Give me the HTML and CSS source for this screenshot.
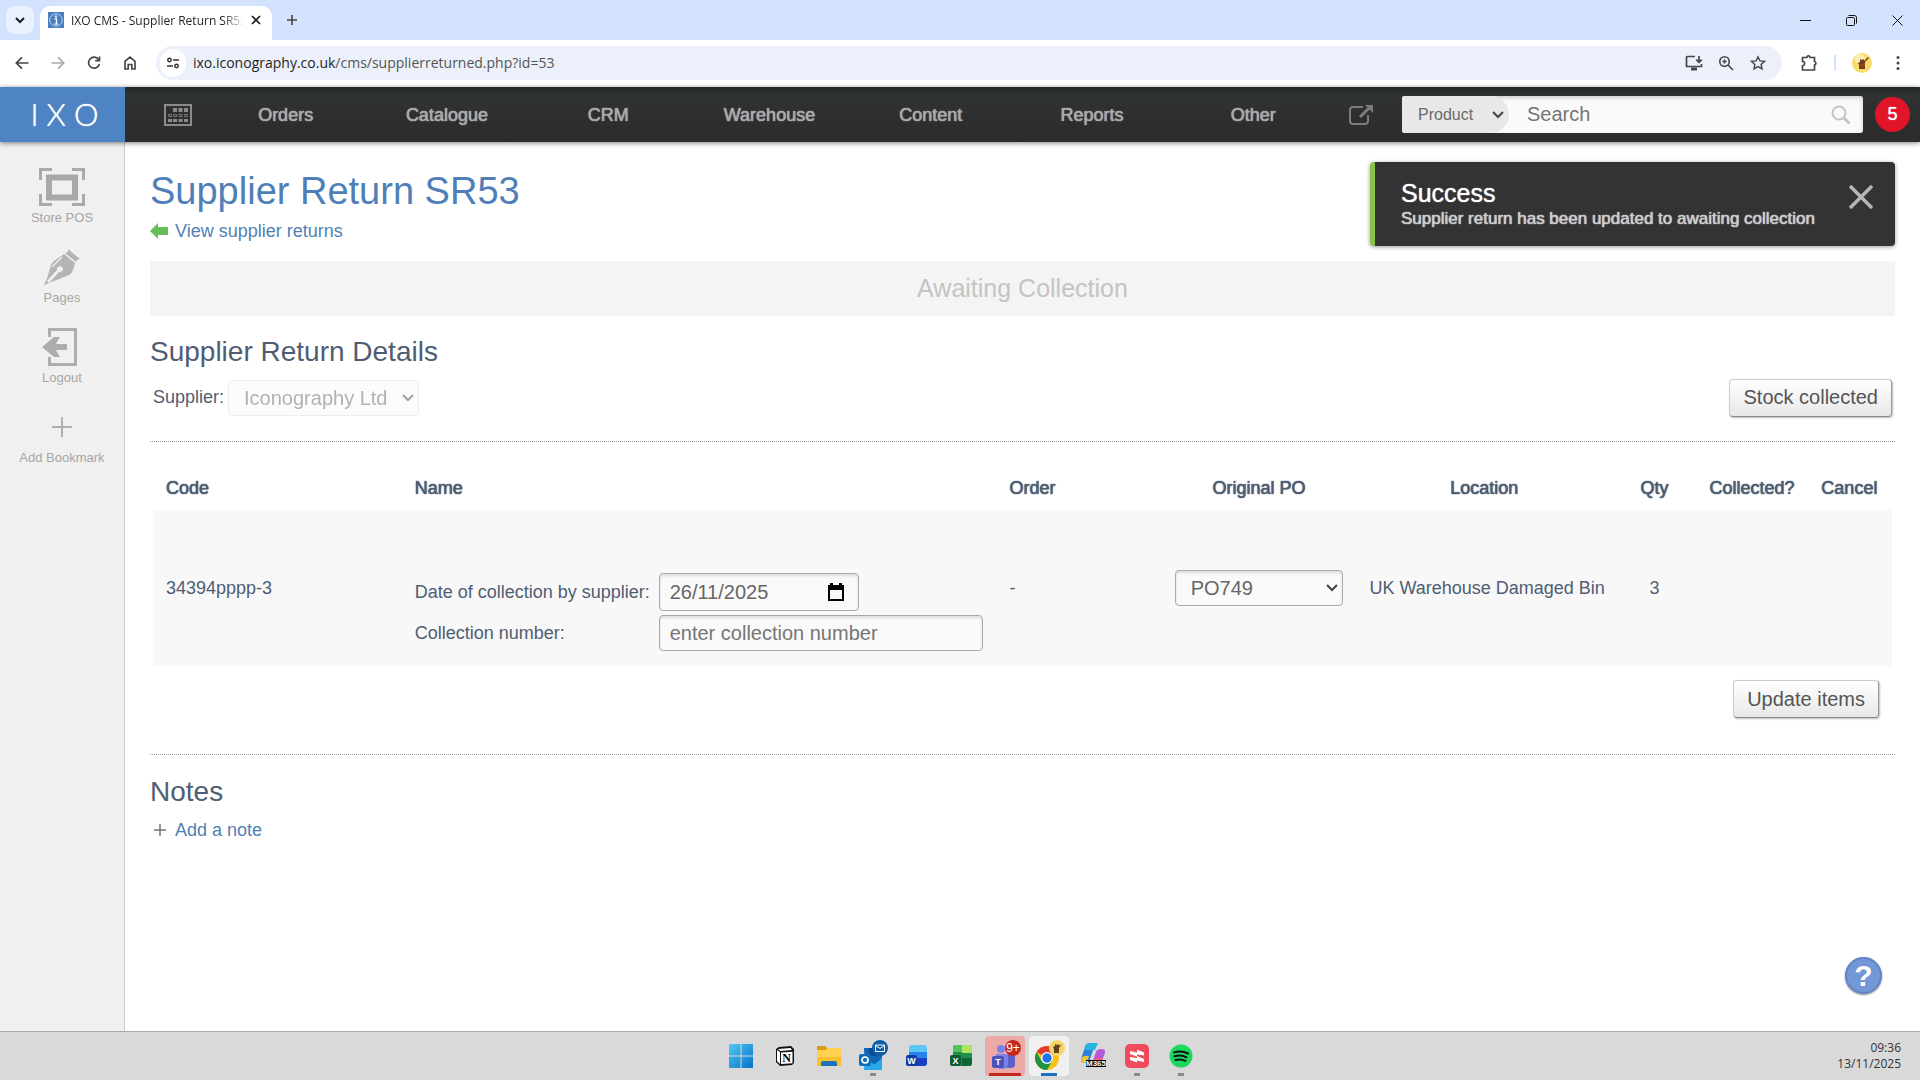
FILE: index.html
```html
<!DOCTYPE html>
<html lang="en-GB">

<head>
    <meta charset="UTF-8"/>
    <meta name="viewport" content="width=device-width, initial-scale=1.0"/>
    <title>IXO CMS - Supplier Return SR53</title>
    <link rel="stylesheet" href="styles.css">
</head>

<body>
<!-- browser tabs -->
<div class="tab-strip">
    <button class="tab-search" aria-label="Search tabs">
        <svg width="12" height="12" viewBox="0 0 12 12" fill="none" stroke="#1f1f1f" stroke-width="2"><path d="M2 4l4 4 4-4"/></svg>
    </button>
    <div class="tab">
        <svg width="16" height="16" viewBox="0 0 16 16"><rect width="16" height="16" fill="#4b7fc0"/><circle cx="8" cy="8" r="6.3" fill="none" stroke="#b9d0ee"/><circle cx="8" cy="4.4" r="1.1" fill="#fff"/><path d="M6.5 6.8h2v5M6.3 12.2h3.6" fill="none" stroke="#fff" stroke-width="1.3"/></svg>
        <span class="tab-title">IXO CMS - Supplier Return SR53</span>
        <button class="plain" aria-label="Close tab">
            <svg width="10" height="10" viewBox="0 0 10 10" stroke="#1f1f1f" stroke-width="1.7"><path d="M1 1l8 8M9 1l-8 8"/></svg>
        </button>
    </div>
    <button class="plain new-tab" aria-label="New tab">
        <svg width="12" height="12" viewBox="0 0 12 12" stroke="#444" stroke-width="1.6"><path d="M6 1v10M1 6h10"/></svg>
    </button>
    <div class="window-buttons">
        <button class="plain" aria-label="Minimise"><svg width="11" height="11" viewBox="0 0 11 11" stroke="#111"><path d="M0 5.5h11"/></svg></button>
        <button class="plain" aria-label="Restore"><svg width="11" height="11" viewBox="0 0 11 11" fill="none" stroke="#111"><rect x="0.5" y="2.5" width="8" height="8" rx="1"/><path d="M2.5 .5h6q2 0 2 2v6"/></svg></button>
        <button class="plain" aria-label="Close"><svg width="11" height="11" viewBox="0 0 11 11" stroke="#111"><path d="M.5 .5l10 10M10.500 .5l-10 10"/></svg></button>
    </div>
</div>

<!-- browser address bar -->
<div class="toolbar">
    <button class="plain tool" aria-label="Back"><svg width="16" height="16" viewBox="0 0 16 16" fill="none" stroke="#444746" stroke-width="1.7"><path d="M14.500 8H2.500M8 2.300L2.300 8 8 13.700"/></svg></button>
    <button class="plain tool" aria-label="Forward"><svg width="16" height="16" viewBox="0 0 16 16" fill="none" stroke="#a9abad" stroke-width="1.7"><path d="M1.500 8h12M8 2.300L13.700 8 8 13.700"/></svg></button>
    <button class="plain tool" aria-label="Reload"><svg width="16" height="16" viewBox="0 0 16 16" fill="none" stroke="#444746" stroke-width="1.7"><path d="M12.600 4.500A5.500 5.500 0 1 0 13.400 9M13.500 1.500v4.200H9.200"/></svg></button>
    <button class="plain tool" aria-label="Home"><svg width="16" height="16" viewBox="0 0 16 16" fill="none" stroke="#444746" stroke-width="1.7"><path d="M3 6.300L8 2.200l5 4.100V14H9.800V9.500H6.200V14H3z"/></svg></button>
    <div class="address-bar">
        <span class="site-info"><svg width="14" height="14" viewBox="0 0 14 14" fill="none" stroke="#333" stroke-width="1.500"><circle cx="3.500" cy="4" r="1.700"/><path d="M7 4h6M1 10h6"/><circle cx="10.500" cy="10" r="1.700"/></svg></span>
        <span class="url">ixo.iconography.co.uk<span class="url-path">/cms/supplierreturned.php?id=53</span></span>
        <button class="plain tool-small" aria-label="Install"><svg width="18" height="18" viewBox="0 0 18 18" fill="none" stroke="#444746" stroke-width="1.700"><path d="M10 2.500H2.500q-1 0-1 1v9h15V10M14 2v6M11.200 5.600L14 8.400l2.800-2.800"/><path d="M6 15h6" stroke-width="3"/></svg></button>
        <button class="plain tool-small" aria-label="Zoom"><svg width="16" height="16" viewBox="0 0 16 16" fill="none" stroke="#444746" stroke-width="1.600"><circle cx="6.500" cy="6.500" r="4.700"/><path d="M10 10l5 5M4.500 6.500h4M6.500 4.500v4"/></svg></button>
        <button class="plain tool-small" aria-label="Bookmark"><svg width="16" height="16" viewBox="0 0 16 16" fill="none" stroke="#444746" stroke-width="1.400"><path d="M8 1.800l1.900 4.100 4.500.5-3.300 3 .9 4.400L8 11.600l-4 2.200.9-4.400-3.300-3 4.500-.5z"/></svg></button>
    </div>
    <button class="plain extensions" aria-label="Extensions"><svg width="18" height="18" viewBox="0 0 18 18" fill="none" stroke="#444746" stroke-width="1.700"><path d="M2.500 3.500h4.300a1.600 1.600 0 0 1 3.200 0h4.500v4a1.800 1.800 0 0 1 0 3.500v5h-12v-4.200q2.200-.6 2.200-2.300T2.500 7.300z"/></svg></button>
    <span class="separator"></span>
    <button class="plain avatar" aria-label="Profile"><svg width="20" height="20" viewBox="0 0 20 20"><circle cx="10" cy="10" r="10" fill="#f8dc6a"/><circle cx="8" cy="6" r="5" fill="#fbeeb0"/><path d="M8 6l2 1 2-1v2l4-4 1 1-4 4v7H7v-4l-1-2 2-1z" fill="#7a3c1d"/><path d="M7 12h6" stroke="#c54a24"/></svg></button>
    <button class="plain browser-menu" aria-label="Menu"><svg width="4" height="16" viewBox="0 0 4 16" fill="#444746"><circle cx="2" cy="2.500" r="1.500"/><circle cx="2" cy="8" r="1.500"/><circle cx="2" cy="13.500" r="1.500"/></svg></button>
</div>

<header class="header">
    <a href="#" class="logo" aria-label="IXO"><span>I</span><span>X</span><span>O</span></a>
    <nav class="nav">
        <a href="#" class="nav-icon" aria-label="Calendar">
            <svg width="28" height="22" viewBox="0 0 28 22"><rect x="1" y="1" width="26" height="20" fill="none" stroke="#8b8b8b" stroke-width="2"/><g fill="#8b8b8b"><path d="M9 4h4v4H9zM14.500 4h4v4h-4zM20 4h4v4h-4zM4 15h4v3H4zM9 15h4v3H9zM14.500 15h4v3h-4zM20 15h4v3h-4z"/></g><path d="M4.500 10.500h3v2h-3zM9.500 10.500h3v2h-3zM15 10.500h3v2h-3zM20.500 10.500h3v2h-3z" fill="none" stroke="#777"/></svg>
        </a>
        <a href="#" class="nav-link">Orders</a>
        <a href="#" class="nav-link">Catalogue</a>
        <a href="#" class="nav-link">CRM</a>
        <a href="#" class="nav-link">Warehouse</a>
        <a href="#" class="nav-link">Content</a>
        <a href="#" class="nav-link">Reports</a>
        <a href="#" class="nav-link">Other</a>
        <a href="#" class="nav-icon external" aria-label="View site">
            <svg width="25" height="22" viewBox="0 0 25 22" fill="none" stroke="#7c7c7c" stroke-width="2"><path d="M14 3H4Q1 3 1 6v11q0 3 3 3h12q3 0 3-3v-6"/><path d="M11 13l9-9" stroke-width="3"/><path d="M16 1h8v8z" fill="#7c7c7c" stroke="none"/></svg>
        </a>
    </nav>
    <form class="search">
        <select class="search-type" aria-label="Search type">
            <option>Product</option>
        </select>
        <input type="text" class="search-input" placeholder="Search" aria-label="Search"/>
        <button type="button" class="plain" aria-label="Go"><svg width="20" height="20" viewBox="0 0 20 20" fill="none" stroke="#c4c4c4" stroke-width="2"><circle cx="8" cy="8" r="6.500"/><path d="M12.500 12.500l6 6" stroke-width="3"/></svg></button>
    </form>
    <a href="#" class="alerts">5</a>
</header>

<div class="page">
    <aside class="sidebar">
        <a href="#" class="bookmark">
            <svg width="46" height="38" viewBox="0 0 46 38" fill="none" stroke="#a9a9a9"><path d="M1.500 12V1.500H13M33 1.500h11.500V12M44.500 26v10.500H33M13 36.500H1.500V26" stroke-width="3"/><rect x="10" y="9.500" width="26" height="20" stroke-width="6"/></svg>
            <span>Store POS</span>
        </a>
        <a href="#" class="bookmark">
            <svg width="36" height="36" viewBox="0 0 36 36" fill="#b4b4b4"><path d="M24 0l12 10-3 1-1 2L21 4l3-1z"/><path d="M20 5l11 9-2 7q-1 3-4 5L5 34l10-11a3 3 0 1 0-2-2L2 33 7 16q1-2 3-4z"/><path d="M18 8L8 18" stroke="#f0f0f0" stroke-width="1.500"/><path d="M0 36l2-5 3 3z"/></svg>
            <span>Pages</span>
        </a>
        <a href="#" class="bookmark">
            <svg width="40" height="38" viewBox="0 0 40 38" fill="none" stroke="#adadad" stroke-width="3"><path d="M7.500 9V1.500h26v35h-26V29"/><path d="M25 19H8" stroke-width="6"/><path d="M0 19L12 9h6l-6 10 6 10h-6z" fill="#adadad" stroke="none"/></svg>
            <span>Logout</span>
        </a>
        <a href="#" class="bookmark">
            <svg width="20" height="20" viewBox="0 0 20 20" stroke="#b0b0b0" stroke-width="2"><path d="M10 0v20M0 10h20"/></svg>
            <span>Add Bookmark</span>
        </a>
    </aside>

    <main class="content">
        <h1>Supplier Return SR53</h1>
        <a href="#" class="icon-link">
            <svg width="18" height="16" viewBox="0 0 18 16" fill="#68bd5b"><path d="M0 8l8-8v4h10v8H8v4z"/></svg>
            View supplier returns
        </a>
        <div class="status">Awaiting Collection</div>

        <h2>Supplier Return Details</h2>
        <div class="details">
            <label for="supplier">Supplier:</label>
            <select id="supplier" class="field select" disabled>
                <option>Iconography Ltd</option>
            </select>
            <button class="btn details-btn">Stock collected</button>
        </div>

        <div class="items">
            <table>
                <thead>
                <tr>
                    <th class="col-code">Code</th>
                    <th class="col-name">Name</th>
                    <th class="col-order">Order</th>
                    <th class="col-po center">Original PO</th>
                    <th class="col-location center">Location</th>
                    <th class="col-qty center">Qty</th>
                    <th class="col-collected center">Collected?</th>
                    <th class="col-cancel center">Cancel</th>
                </tr>
                </thead>
                <tbody>
                <tr>
                    <td>34394pppp-3</td>
                    <td>
                        <div class="collection">
                            <label for="collection-date">Date of collection by supplier:</label>
                            <div class="field date-field">
                                <input type="text" id="collection-date" value="26/11/2025"/>
                                <button class="plain" aria-label="Show date picker"><svg width="16" height="18" viewBox="0 0 16 18"><path d="M1 4h14v13H1z" fill="none" stroke="#000" stroke-width="2"/><path d="M0 2h16v5H0zM2 0h3v3H2zM11 0h3v3h-3z"/></svg></button>
                            </div>
                            <label for="collection-number">Collection number:</label>
                            <input type="text" id="collection-number" class="field" placeholder="enter collection number"/>
                        </div>
                    </td>
                    <td>-</td>
                    <td class="center">
                        <select class="field select po-select" aria-label="Original PO">
                            <option>PO749</option>
                        </select>
                    </td>
                    <td class="center">UK Warehouse Damaged Bin</td>
                    <td class="center">3</td>
                    <td></td>
                    <td></td>
                </tr>
                </tbody>
            </table>
            <div class="items-footer">
                <button class="btn">Update items</button>
            </div>
        </div>

        <h2>Notes</h2>
        <a href="#" class="icon-link add-note">
            <svg width="18" height="12" viewBox="0 0 18 12" stroke="#777" stroke-width="1.500"><path d="M10 0v12M4 6h12"/></svg>
            Add a note
        </a>

        <div class="toast">
            <div>
                <div class="toast-title">Success</div>
                <div class="toast-text">Supplier return has been updated to awaiting collection</div>
            </div>
            <button class="plain toast-close" aria-label="Dismiss"><svg width="24" height="24" viewBox="0 0 24 24" stroke="#b5b5b5" stroke-width="3.500"><path d="M1 1l22 22M23 1L1 23"/></svg></button>
        </div>
        <button class="help" aria-label="Help">?</button>
    </main>
</div>

<footer class="taskbar">
    <div class="apps">
        <a href="#" class="app" aria-label="Start"><svg width="24" height="24" viewBox="0 0 24 24"><defs><linearGradient id="win" x2="1" y2="1"><stop stop-color="#4fc9f5"/><stop offset="1" stop-color="#0571c9"/></linearGradient></defs><path d="M0 1q0-1 1-1h10.500v11.500H0zM12.500 0H23q1 0 1 1v10.500H12.500zM0 12.500h11.500V24H1q-1 0-1-1zM12.500 12.500H24V23q0 1-1 1H12.500z" fill="url(#win)"/></svg></a>
        <a href="#" class="app" aria-label="Notion"><svg width="20" height="20" viewBox="0 0 20 20"><path d="M1 3l3-2 12-1 3 3v14l-2 2-12 1-4-4z" fill="#111"/><path d="M2 4l3 2v12l-3-3zM6 6.500l11.500-.7v11.400L6 18zM3 3l12.500-1L17 4 5.500 5z" fill="#fff"/><text x="11.500" y="16" text-anchor="middle" class="notion-n">N</text></svg></a>
        <a href="#" class="app" aria-label="Explorer"><svg width="26" height="22" viewBox="0 0 26 22"><path d="M1 1h8l2 2v5H1z" fill="#dc9a15"/><path d="M1 5h9l2-2h13v17q0 1-1 1H2q-1 0-1-1z" fill="#ffd052"/><path d="M1 12h24v8q0 1-1 1H2q-1 0-1-1z" fill="#fbc12c"/><path d="M5 21v-3q0-2 2-2h12q2 0 2 2v3z" fill="#1c73bd"/></svg></a>
        <a href="#" class="app running" aria-label="Outlook"><svg width="32" height="32" viewBox="0 0 32 32"><path d="M7 8h18v22H8z" fill="#1066b5"/><path d="M8 18l17 12H7zM25 18v12H11z" fill="#28a8ea"/><path d="M12 8h8v8h-8z" fill="#0b4a92"/><rect x="2" y="14" width="12" height="12" rx="2" fill="#0f6cbd"/><circle cx="8" cy="20" r="3" fill="none" stroke="#fff" stroke-width="1.700"/><circle cx="23" cy="8" r="8" fill="#0f5ea8"/><path d="M18.500 5h9v6.500h-9zM18.500 5.500l4.500 3 4.500-3" fill="none" stroke="#fff"/></svg></a>
        <a href="#" class="app" aria-label="Word"><svg width="24" height="24" viewBox="0 0 24 24"><rect x="4" y="1" width="18" height="9" rx="3" fill="#5cc6f5"/><path d="M4 8h18v7H4z" fill="#2a83ea"/><path d="M4 14h18v5q0 3-3 3H4z" fill="#173fc0"/><rect x="1" y="11" width="11" height="11" rx="2" fill="#123ba8"/><text x="6.500" y="20" text-anchor="middle" class="app-letter">W</text></svg></a>
        <a href="#" class="app" aria-label="Excel"><svg width="24" height="24" viewBox="0 0 24 24"><rect x="4" y="1" width="19" height="21" rx="3" fill="#1d8f4c"/><path d="M13 1h7q3 0 3 3v5H13z" fill="#b0e465"/><path d="M4 8V4q0-3 3-3h6v7z" fill="#52c45f"/><path d="M13 14h10v5q0 3-3 3h-7z" fill="#0d6636"/><rect x="1" y="11" width="11" height="11" rx="2" fill="#0d5c32"/><text x="6.500" y="20" text-anchor="middle" class="app-letter">X</text></svg></a>
        <a href="#" class="app teams" aria-label="Teams"><svg width="32" height="34" viewBox="0 0 32 34"><circle cx="12" cy="10" r="4" fill="#7b83eb"/><rect x="13" y="15" width="13" height="14" rx="4" fill="#5b5fc7"/><path d="M7 15h12v10q0 5-6 5t-6-5z" fill="#7b83eb"/><rect x="3" y="17" width="12" height="12" rx="2" fill="#4b53bc"/><text x="9" y="26" text-anchor="middle" class="app-letter">T</text><circle cx="24" cy="9" r="8" fill="#c6281c"/><text x="24" y="13" text-anchor="middle" class="badge-text">9+</text></svg></a>
        <a href="#" class="app chrome" aria-label="Chrome"><svg width="32" height="34" viewBox="0 0 32 34"><g transform="translate(14 19)"><circle r="12" fill="#fbc116"/><path d="M0 0L-10.400-6A12 12 0 0 1 10.400-6z" fill="#e33b2e"/><path d="M-10.400-6A12 12 0 0 0 0 12L5.200 3-5.200 3z" fill="#229342"/><circle r="6" fill="#fff"/><circle r="4.700" fill="#1a73e8"/></g><circle cx="24" cy="9" r="8" fill="#f3d768"/><path d="M22 5l2 1 2-1v2l3-2-3 4v5h-5v-4l-1-2 2-1z" fill="#61401c"/></svg></a>
        <a href="#" class="app" aria-label="M365"><svg width="28" height="28" viewBox="0 0 28 28"><path d="M2 17L6 5q1-4 5-4h8q-3 0-4 4l-4 12q-1 4-5 4-5 0-4-4z" fill="#2a7fe0"/><path d="M6 5q1-4 5-4h8l-3 7H5z" fill="#28b4d8"/><path d="M2 17q2-4 8-3l-1 3q-1 4-4 4t-3-4z" fill="#f2c230"/><path d="M26 11l-4 10q-1 4-5 4H9q3 0 4-4l4-11q1-3 5-3 5 0 4 4z" fill="#b45bd6"/><path d="M24 16l-2 5q-1 4-5 4H9q3 0 4-4l2-5z" fill="#ee5a8c"/><rect x="7" y="18" width="20" height="7" fill="#000"/><text x="17" y="24" text-anchor="middle" class="m365">M365</text></svg></a>
        <a href="#" class="app running" aria-label="Screen recorder"><svg width="24" height="24" viewBox="0 0 24 24"><rect width="24" height="24" rx="5" fill="#f04a5e"/><path d="M5 7l7 1.500V5.500l7 3v3l-7-1v2L5 10zM5 13l7 1v-2l7 3v3l-7-1.500v2L5 16z" fill="#fff"/></svg></a>
        <a href="#" class="app running" aria-label="Spotify"><svg width="24" height="24" viewBox="0 0 24 24"><circle cx="12" cy="12" r="11.500" fill="#1ed760"/><path d="M5 8.500q7.500-2.200 14 1M5.500 12.300q7-1.800 12 1M6.500 16q5.500-1.500 10 .8" fill="none" stroke="#111" stroke-width="2" stroke-linecap="round"/></svg></a>
    </div>
    <div class="clock">09:36<br/>13/11/2025</div>
</footer>
</body>

</html>
```
FILE: styles.css
```css
* {
    box-sizing: border-box;
}

body {
    margin: 0;
    min-height: 100vh;
    display: flex;
    flex-direction: column;
    font-family: "Liberation Sans", Arial, sans-serif;
    font-size: 18px;
    color: #4f5d73;
    background-color: #fff;
}

svg {
    display: block;
    flex: none;
}

a {
    color: #4f7fb5;
    text-decoration: none;
}

input,
select,
button {
    font-family: inherit;
}

.plain {
    display: flex;
    align-items: center;
    justify-content: center;
    padding: 0;
    border: none;
    background: none;
}

.center {
    text-align: center;
}

/* browser */
.tab-strip {
    display: flex;
    height: 40px;
    padding-left: 6px;
    background-color: #d3e2fd;
    font-family: "Open Sans", sans-serif;
}

.tab-search {
    display: flex;
    align-items: center;
    justify-content: center;
    width: 28px;
    height: 28px;
    margin: 6px 6px 0 0;
    padding: 0;
    border: none;
    border-radius: 9px;
    background-color: #e9f0fe;
}

.tab {
    display: flex;
    align-items: center;
    gap: 7px;
    width: 232px;
    margin-top: 6px;
    padding: 0 11px 6px 8px;
    border-radius: 10px 10px 0 0;
    background-color: #fff;
}

.tab-title {
    flex: 1;
    overflow: hidden;
    white-space: nowrap;
    font-size: 12px;
    color: #1f1f1f;
    -webkit-mask-image: linear-gradient(to right, #000 88%, transparent);
}

.new-tab {
    margin-left: 14px;
}

.window-buttons {
    display: flex;
    margin-left: auto;
}

.window-buttons .plain {
    width: 46px;
}

.toolbar {
    display: flex;
    align-items: center;
    height: 47px;
    padding: 0 12px 1px 4px;
    background-color: #fff;
    font-family: "Open Sans", sans-serif;
}

.tool {
    width: 36px;
}

.address-bar {
    display: flex;
    align-items: center;
    flex: 1;
    height: 34px;
    margin-left: 8px;
    padding: 0 8px 0 4px;
    border-radius: 17px;
    background-color: #ebf0fa;
}

.site-info {
    display: flex;
    align-items: center;
    justify-content: center;
    width: 26px;
    height: 28px;
    border-radius: 14px;
    background-color: #fff;
}

.url {
    flex: 1;
    margin-left: 7px;
    font-size: 14px;
    line-height: 18px;
    padding-bottom: 1px;
    color: #1f1f1f;
}

.url-path {
    color: #555;
}

.tool-small {
    width: 32px;
}

.extensions {
    margin-left: 18px;
}

.separator {
    width: 2px;
    height: 16px;
    margin: 0 16px;
    background-color: #d3e2fd;
}

.browser-menu {
    width: 20px;
    margin-left: 16px;
}

/* cms header */
.header {
    position: relative;
    z-index: 1;
    display: flex;
    align-items: center;
    height: 55px;
    padding-right: 10px;
    background: linear-gradient(#262827, #2f3331 15%, #2b2b2b);
    box-shadow: 0 1px 5px rgba(0, 0, 0, 0.5);
}

.logo {
    display: flex;
    align-items: center;
    justify-content: center;
    gap: 8px;
    width: 125px;
    height: 100%;
    padding: 0 0 2px 4px;
    background-color: #4e84c4;
    color: #fff;
    font-family: Lato, sans-serif;
    font-size: 31px;
    font-weight: 300;
    text-shadow: 0 0 1px #fff;
}

.nav {
    display: flex;
    align-items: center;
    flex: 1;
}

.nav-icon {
    display: flex;
    justify-content: center;
    width: 80px;
    padding-left: 25px;
}

.nav-icon.external {
    width: 68px;
    padding: 0 12px 0 0;
}

.nav-link {
    flex: 1;
    padding-top: 1px;
    text-align: center;
    color: #aaa;
    text-shadow: 0 0 1px #aaa, 0 0 1px #aaa;
}

.search {
    display: flex;
    align-items: center;
    width: 461px;
    height: 37px;
    padding-right: 12px;
    border-radius: 3px;
    background-color: #fafafa;
    box-shadow: inset 0 2px 4px #ccc;
}

.search-type {
    appearance: none;
    width: 107px;
    height: 37px;
    padding: 0 0 0 16px;
    border: none;
    border-radius: 3px 20px 20px 3px;
    background: #e8e8e8 url("data:image/svg+xml,%3Csvg xmlns='http://www.w3.org/2000/svg' width='12' height='8'%3E%3Cpath d='M1 1l5 5 5-5' fill='none' stroke='%23444' stroke-width='2'/%3E%3C/svg%3E") no-repeat right 5px center;
    color: #6a6a6a;
    font-size: 16px;
}

.search-input {
    flex: 1;
    min-width: 0;
    padding: 0 0 0 18px;
    border: none;
    background: none;
    font-size: 20px;
}

input::placeholder {
    color: #757575;
}

.alerts {
    width: 35px;
    margin-left: 12px;
    border-radius: 50%;
    background-color: #e1142a;
    color: #fff;
    line-height: 35px;
    text-align: center;
    text-shadow: 0 0 1px #fff;
}

/* page */
.page {
    display: flex;
    flex: 1;
}

.sidebar {
    width: 125px;
    padding-top: 25px;
    border-right: 1px solid #ccc;
    background-color: #f0f0f0;
}

.bookmark {
    display: grid;
    grid-template-rows: 40px 20px;
    place-items: center;
    height: 80px;
    align-content: start;
    color: #a6a6a6;
    font-size: 13px;
}

.content {
    position: relative;
    flex: 1;
    padding: 25px 25px 24px;
}

h1,
h2 {
    margin: 0;
    font-weight: normal;
}

h1 {
    font-size: 38px;
    line-height: 48px;
    color: #4f7fb8;
}

h2 {
    font-size: 28px;
    line-height: 36px;
}

.icon-link {
    display: flex;
    align-items: center;
    gap: 7px;
    line-height: 32px;
}

.add-note {
    margin-top: 4px;
}

.status {
    margin: 14px 0 18px;
    background-color: #f4f4f4;
    color: #c4c4c4;
    font-size: 25px;
    line-height: 55px;
    text-align: center;
}

.details {
    display: flex;
    align-items: center;
    gap: 4px;
    height: 72px;
    padding: 0 3px 16px;
    border-bottom: 1px dotted #999;
}

.details-btn {
    margin-left: auto;
}

.field {
    height: 36px;
    padding: 0 10px;
    border: 1px solid #aaa;
    border-radius: 4px;
    background-color: #fafafa;
    box-shadow: inset 0 2px 3px #ddd;
    color: #666;
    font-size: 20px;
}

.select {
    appearance: none;
    padding: 0 30px 0 15px;
    background-image: url("data:image/svg+xml,%3Csvg xmlns='http://www.w3.org/2000/svg' width='12' height='8'%3E%3Cpath d='M1 1l5 5 5-5' fill='none' stroke='%23444' stroke-width='2'/%3E%3C/svg%3E");
    background-repeat: no-repeat;
    background-position: right 4px center;
}

.select:disabled {
    opacity: 0.5;
    border-color: #ddd;
    box-shadow: none;
}

.btn {
    height: 38px;
    padding: 0 13px;
    border: 1px solid #ccc;
    border-right-color: #999;
    border-bottom-color: #888;
    border-radius: 4px;
    background: linear-gradient(#fff, #e8e8e8);
    box-shadow: 1px 1px 2px #bbb;
    color: #555;
    font-size: 20px;
}

.items {
    margin-bottom: 19px;
    padding: 24px 3px 36px;
    border-bottom: 1px dotted #999;
}

table {
    width: 100%;
    border-collapse: collapse;
    table-layout: fixed;
}

th,
td {
    height: 44px;
    padding: 0 13px;
    text-align: left;
    white-space: nowrap;
}

th {
    font-weight: normal;
    text-shadow: 0 0 1px #4f5d73, 0 0 1px #4f5d73;
}

td {
    height: 156px;
    background-color: #f8f8f8;
}

th.center,
td.center {
    text-align: center;
}

.col-code {
    width: 14.3%;
}

.col-name {
    width: 34.2%;
}

.col-order {
    width: 9.5%;
}

.col-po {
    width: 11.2%;
}

.col-location {
    width: 14.7%;
}

.col-qty {
    width: 4.9%;
}

.col-collected {
    width: 6.3%;
    padding: 0;
}

.col-cancel {
    width: 4.9%;
    padding: 0;
}

.collection {
    display: grid;
    grid-template-columns: 244px 1fr;
    align-items: center;
    row-gap: 4px;
    padding-top: 48px;
}

.date-field {
    display: flex;
    align-items: center;
    width: 200px;
    height: 38px;
    padding-right: 14px;
}

.date-field input {
    flex: 1;
    min-width: 0;
    padding: 0;
    border: none;
    background: none;
    color: #666;
    font-size: 20px;
}

.po-select {
    width: 100%;
}

.items-footer {
    padding: 14px 13px 0 0;
    text-align: right;
}

/* floating over the page */
.toast {
    position: absolute;
    top: 20px;
    right: 25px;
    display: flex;
    align-items: flex-start;
    justify-content: space-between;
    width: 525px;
    height: 84px;
    padding: 17px 22px 0 26px;
    border-left: 5px solid #8bc34a;
    border-radius: 4px;
    background-color: #333;
    box-shadow: 0 1px 4px #999;
}

.toast-title {
    color: #fff;
    font-size: 25px;
    line-height: 28px;
    text-shadow: 0 0 1px #fff;
}

.toast-text {
    color: #ccc;
    font-size: 17px;
    line-height: 24px;
    white-space: nowrap;
    text-shadow: 0 0 1px #ccc, 0 0 1px #ccc;
}

.toast-close {
    margin-top: 6px;
}

.help {
    position: absolute;
    right: 38px;
    bottom: 37px;
    width: 37px;
    height: 37px;
    padding: 0;
    border: 2px solid #6285c6;
    border-radius: 50%;
    background-color: #7497d8;
    box-shadow: 0 1px 2px #888;
    color: #fff;
    font-size: 30px;
    font-weight: bold;
    line-height: 30px;
}

/* taskbar */
.taskbar {
    display: grid;
    grid-template-columns: 1fr auto 1fr;
    height: 49px;
    border-top: 1px solid #aaa;
    background-color: #d9d9d9;
}

.apps {
    grid-column: 2;
    display: flex;
    gap: 4px;
    padding: 4px 0 0 2px;
}

.app {
    display: flex;
    align-items: center;
    justify-content: center;
    width: 40px;
    height: 40px;
    border-radius: 4px;
}

.running {
    background: linear-gradient(#888, #888) no-repeat center bottom / 6px 3px;
}

.teams {
    background: #ecaaa6 linear-gradient(#c6281c, #c6281c) no-repeat center bottom / 32px 3px;
}

.chrome {
    background: #f0f0f0 linear-gradient(#1a6fc4, #1a6fc4) no-repeat center bottom / 16px 3px;
}

.app-letter {
    fill: #fff;
    font-size: 9px;
    font-weight: bold;
}

.badge-text {
    fill: #fff;
    font-size: 12px;
}

.notion-n {
    font-family: "Liberation Serif", serif;
    font-size: 12px;
    font-weight: bold;
}

.m365 {
    fill: #fff;
    font-size: 8px;
    font-weight: bold;
}

.clock {
    padding: 8px 19px 0 0;
    color: #333;
    font-family: "Open Sans", sans-serif;
    font-size: 12px;
    line-height: 16px;
    text-align: right;
}
```
